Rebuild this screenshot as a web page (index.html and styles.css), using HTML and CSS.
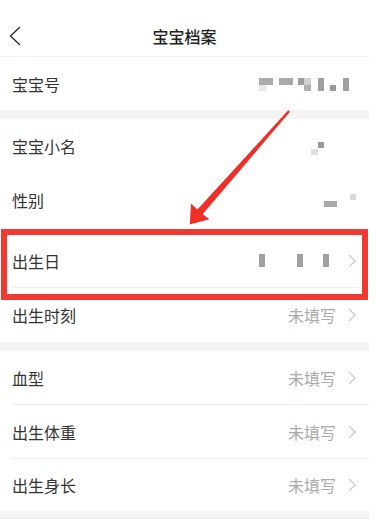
FILE: index.html
```html
<!DOCTYPE html>
<html lang="zh-CN">
<head>
<meta charset="utf-8">
<title>宝宝档案</title>
<link rel="stylesheet" href="styles.css">
</head>
<body>
<div class="page">
  <header class="nav">
    <span class="nav-side">
      <svg class="back" width="12" height="20" viewBox="0 0 12 20"><polyline points="10.5,1.5 1.5,10 10.5,18.5" fill="none" stroke="#333" stroke-width="1.5" stroke-linecap="round" stroke-linejoin="round"/></svg>
    </span>
    <h1 class="title">宝宝档案</h1>
    <span class="nav-side"></span>
  </header>

  <section class="group">
    <div class="row h53">
      <div class="row-inner nosep">
        <span class="label">宝宝号</span>
        <svg class="mosaic m-id" width="91" height="13" viewBox="0 0 91 13">
          <rect x="0" y="0" width="14" height="7" fill="#ababab"/>
          <rect x="0" y="7" width="7" height="6" fill="#e8e8e8"/>
          <rect x="20" y="0" width="14" height="7" fill="#a9a9a9"/>
          <rect x="39" y="0" width="6" height="7" fill="#9c9c9c"/>
          <rect x="45" y="0" width="7" height="7" fill="#d0d0d0"/>
          <rect x="45" y="7" width="7" height="6" fill="#b0b0b0"/>
          <rect x="59" y="0" width="6" height="13" fill="#a0a0a0"/>
          <rect x="71" y="7" width="6" height="6" fill="#9a9a9a"/>
          <rect x="84" y="0" width="6" height="13" fill="#a0a0a0"/>
        </svg>
      </div>
    </div>
  </section>

  <div class="gap"></div>

  <section class="group">
    <div class="row h54">
      <div class="row-inner nosep">
        <span class="label">宝宝小名</span>
        <svg class="mosaic m-name" width="13" height="13" viewBox="0 0 13 13">
          <rect x="7" y="0" width="6" height="6" fill="#9c9c9c"/>
          <rect x="0" y="7" width="7" height="6" fill="#dedede"/>
        </svg>
      </div>
    </div>
    <div class="row h54">
      <div class="row-inner nosep">
        <span class="label">性别</span>
        <svg class="mosaic m-sex" width="32" height="13" viewBox="0 0 32 13">
          <rect x="0" y="7" width="13" height="6" fill="#a8a8a8"/>
          <rect x="26" y="0" width="6" height="6" fill="#dadada"/>
        </svg>
      </div>
    </div>
    <div class="row h61 pad-top">
      <div class="row-inner">
        <span class="label">出生日</span>
        <span class="right">
          <svg class="mosaic" width="70" height="13" viewBox="0 0 70 13">
            <rect x="0" y="0" width="6" height="13" fill="#a0a0a0"/>
            <rect x="38" y="0" width="6" height="13" fill="#a0a0a0"/>
            <rect x="64" y="0" width="6" height="13" fill="#a0a0a0"/>
          </svg>
          <svg class="chev chev-far" width="9" height="14" viewBox="0 0 9 14"><polyline points="1.5,1.5 7,7 1.5,12.5" fill="none" stroke="#c9c9c9" stroke-width="1.2" stroke-linecap="round" stroke-linejoin="round"/></svg>
        </span>
      </div>
    </div>
    <div class="row h54">
      <div class="row-inner nosep">
        <span class="label">出生时刻</span>
        <span class="right">
          <span class="value">未填写</span>
          <svg class="chev" width="9" height="14" viewBox="0 0 9 14"><polyline points="1.5,1.5 7,7 1.5,12.5" fill="none" stroke="#c9c9c9" stroke-width="1.2" stroke-linecap="round" stroke-linejoin="round"/></svg>
        </span>
      </div>
    </div>
  </section>

  <div class="gap"></div>

  <section class="group">
    <div class="row h54">
      <div class="row-inner">
        <span class="label">血型</span>
        <span class="right">
          <span class="value">未填写</span>
          <svg class="chev" width="9" height="14" viewBox="0 0 9 14"><polyline points="1.5,1.5 7,7 1.5,12.5" fill="none" stroke="#c9c9c9" stroke-width="1.2" stroke-linecap="round" stroke-linejoin="round"/></svg>
        </span>
      </div>
    </div>
    <div class="row h54">
      <div class="row-inner">
        <span class="label">出生体重</span>
        <span class="right">
          <span class="value">未填写</span>
          <svg class="chev" width="9" height="14" viewBox="0 0 9 14"><polyline points="1.5,1.5 7,7 1.5,12.5" fill="none" stroke="#c9c9c9" stroke-width="1.2" stroke-linecap="round" stroke-linejoin="round"/></svg>
        </span>
      </div>
    </div>
    <div class="row h52">
      <div class="row-inner nosep">
        <span class="label">出生身长</span>
        <span class="right">
          <span class="value">未填写</span>
          <svg class="chev" width="9" height="14" viewBox="0 0 9 14"><polyline points="1.5,1.5 7,7 1.5,12.5" fill="none" stroke="#c9c9c9" stroke-width="1.2" stroke-linecap="round" stroke-linejoin="round"/></svg>
        </span>
      </div>
    </div>
  </section>

  <div class="gap gap-bottom"></div>

  <div class="highlight"></div>
  <svg class="arrow" width="369" height="525" viewBox="0 0 369 525">
    <polygon points="288.2,110.2 290,111.8 202.6,214.2 209.5,219.2 189.8,224.6 191,203.6 197.4,209.6" fill="#ee3027"/>
  </svg>
</div>
</body>
</html>
```

FILE: styles.css
```css
* {
  box-sizing: border-box;
}

html, body {
  margin: 0;
  padding: 0;
  background: #ffffff;
}

body {
  font-family: "Noto Sans CJK SC", "Noto Sans", sans-serif;
  color: #333333;
}

.page {
  position: relative;
  width: 369px;
  height: 525px;
  overflow: hidden;
  background: #ffffff;
}

.nav {
  height: 57px;
  padding-top: 16px;
  display: grid;
  grid-template-columns: 1fr auto 1fr;
  align-items: center;
  border-bottom: 1px solid #f0f0f0;
}

.nav-side {
  display: flex;
  align-items: center;
  height: 40px;
}

.back {
  display: block;
  margin-left: 9px;
}

.title {
  margin: 0;
  font-size: 16px;
  font-weight: 500;
  color: #222222;
  line-height: 40px;
  letter-spacing: 0;
}

.group {
  background: #ffffff;
}

.row {
  padding-left: 12px;
  display: flex;
}

.row-inner {
  flex: 1;
  display: flex;
  align-items: center;
  justify-content: space-between;
  padding-right: 12px;
  border-bottom: 1px solid #efefef;
}

.row-inner.nosep {
  border-bottom: none;
}

.h53 { height: 53px; }
.h54 { height: 54px; }
.h52 { height: 52px; }
.h61 { height: 61px; }

.pad-top {
  padding-top: 7px;
}

.label {
  font-size: 16px;
  color: #333333;
  line-height: 22px;
}

.right {
  display: flex;
  align-items: center;
}

.value {
  font-size: 16px;
  color: #ababab;
  line-height: 22px;
}

.chev {
  display: block;
  margin-left: 12px;
  margin-right: 0;
}

.chev-far {
  margin-left: 19px;
}

.mosaic {
  display: block;
}

.m-id {
  margin-right: 7px;
  margin-top: 2px;
}

.m-name {
  margin-right: 33px;
  margin-top: 4px;
}

.m-sex {
  margin-right: 1px;
  margin-top: 1px;
}

.gap {
  height: 9px;
  background: #f4f4f4;
}

.gap-bottom {
  height: 8px;
  border-bottom: 1px solid #ececec;
}

.highlight {
  position: absolute;
  left: 1px;
  top: 229px;
  width: 367px;
  height: 71px;
  border: 6px solid #ef3a31;
  pointer-events: none;
}

.arrow {
  position: absolute;
  left: 0;
  top: 0;
  pointer-events: none;
}
```
